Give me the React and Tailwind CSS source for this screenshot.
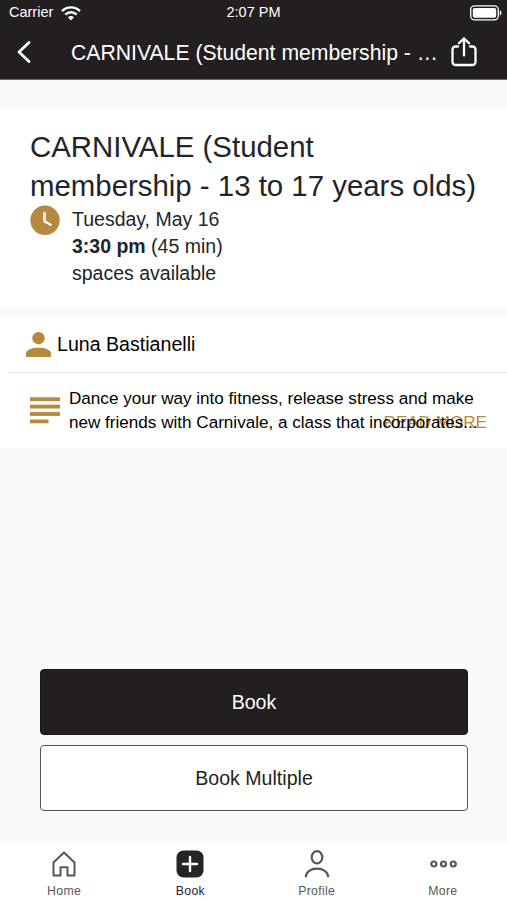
import React, { useState } from 'react';

const HomeIcon = () => (
  <svg className="w-7 h-7" viewBox="0 0 28 28" fill="none" stroke="currentColor" strokeWidth="2" strokeLinejoin="round">
    <path d="M3.5 25.4V12.5L14 2.6l10.5 9.9v12.9h-7v-8.2h-7v8.2z" />
  </svg>
);

const BookIcon = () => (
  <svg className="w-7 h-7" viewBox="0 0 28 28" fill="none">
    <rect x="0.5" y="0.5" width="27" height="27" rx="7" fill="currentColor" />
    <path d="M14 7v14M7 14h14" stroke="white" strokeWidth="2.4" strokeLinecap="round" />
  </svg>
);

const ProfileIcon = () => (
  <svg className="w-7 h-7" viewBox="0 0 28 28" fill="none" stroke="currentColor" strokeWidth="2.2">
    <ellipse cx="14" cy="7.3" rx="5.3" ry="6.1" />
    <path d="M2.8 27.3C2.8 21.5 8 18.6 14 18.6s11.2 2.9 11.2 8.7" />
  </svg>
);

const MoreIcon = () => (
  <svg className="w-7 h-7" viewBox="0 0 28 28" fill="none" stroke="currentColor" strokeWidth="2.2">
    <circle cx="4.8" cy="14" r="2.5" />
    <circle cx="14.5" cy="14" r="2.5" />
    <circle cx="24.3" cy="14" r="2.5" />
  </svg>
);

const tabs = [
  { id: 'home', label: 'Home', icon: HomeIcon },
  { id: 'book', label: 'Book', icon: BookIcon },
  { id: 'profile', label: 'Profile', icon: ProfileIcon },
  { id: 'more', label: 'More', icon: MoreIcon }
];

const StatusBar = () => (
  <div className="grid grid-cols-3 items-center h-[25px] pl-[9px] pr-[5px] text-[14.5px]">
    <div className="flex items-center gap-2">
      <span className="pt-px">Carrier</span>
      <svg className="w-5 h-4" viewBox="0 0 20 16" fill="none" stroke="currentColor" strokeWidth="2.4">
        <path d="M1 6.2C6 1.1 14 1.1 19 6.2" />
        <path d="M4.3 9.7c3.2-3.3 8.2-3.3 11.4 0" />
        <path d="M10 15.5l-3-3.2c1.7-1.7 4.3-1.7 6 0z" fill="currentColor" stroke="none" />
      </svg>
    </div>
    <span className="text-center pr-1">2:07 PM</span>
    <svg className="w-8 h-4 justify-self-end" viewBox="0 0 32 16" fill="none">
      <rect x="0.7" y="0.9" width="27.6" height="14" rx="3.8" stroke="white" strokeWidth="1.3" />
      <rect x="2.8" y="3" width="23.4" height="9.8" rx="1.8" fill="white" />
      <path d="M29.8 5.3c2.2.8 2.2 4.4 0 5.2z" fill="white" />
    </svg>
  </div>
);

const Header = () => (
  <header className="shrink-0 h-[80px] bg-[#231f20] text-white border-b border-[#6b6869]">
    <StatusBar />
    <div className="flex items-center h-[54px]">
      <button className="w-[71px] pl-[16px]" aria-label="Back">
        <svg className="w-4 h-6" viewBox="0 0 16 24" fill="none" stroke="currentColor" strokeWidth="2.8" strokeLinecap="round" strokeLinejoin="round">
          <path d="M13 2.5L3 12l10 9.5" />
        </svg>
      </button>
      <h1 className="w-[368px] pt-px text-[21.2px] whitespace-nowrap">CARNIVALE (Student membership - …</h1>
      <button className="ml-[11px]" aria-label="Share">
        <svg className="w-[28px] h-[30px]" viewBox="0 0 28 30" fill="none" stroke="currentColor" strokeWidth="2.3" strokeLinecap="round" strokeLinejoin="round">
          <path d="M8 9.5H5.5a3 3 0 0 0-3 3V25a3 3 0 0 0 3 3h17a3 3 0 0 0 3-3V12.5a3 3 0 0 0-3-3H20" />
          <path d="M14 18.5V1.5M9 6.2l5-4.7 5 4.7" />
        </svg>
      </button>
    </div>
  </header>
);

const ClassSummary = () => (
  <section className="mt-[28px] h-[198px] bg-white pl-[30px] pt-[19px] text-[#212529]">
    <h2 className="text-[29.4px] leading-[39px]">
      CARNIVALE (Student
      <br />
      membership - 13 to 17 years olds)
    </h2>
    <div className="flex gap-3">
      <svg className="w-[30px] h-[30px]" viewBox="0 0 30 30">
        <circle cx="15" cy="15.3" r="14.7" fill="#b58a3f" />
        <path d="M14.5 7.3v9l7 4" fill="none" stroke="white" strokeWidth="2.4" />
      </svg>
      <div className="pt-px text-[19.5px] leading-[27px]">
        <p>Tuesday, May 16</p>
        <p><b>3:30 pm</b> (45 min)</p>
        <p>spaces available</p>
      </div>
    </div>
  </section>
);

const ClassDetails = () => (
  <section className="mt-[10px] h-[132px] bg-white text-black">
    <div className="flex items-center gap-[6px] h-[56px] pl-[26px]">
      <svg className="w-[25px] h-[25px]" viewBox="0 0 25 25" fill="#b58a3f">
        <circle cx="12.5" cy="6.2" r="6.2" />
        <path d="M0 25v-3.2c0-4.3 6-6 12.500-6s12.500 1.700 12.500 6V25z" />
      </svg>
      <span className="pt-[2px] text-[19.6px]">Luna Bastianelli</span>
    </div>
    <div className="ml-2 border-t border-[#ebebec]" />
    <div className="relative flex pl-[30px] pt-[13px]">
      <svg className="w-[30px] h-[27px] mt-[11px] mr-[9px]" viewBox="0 0 30 27" fill="#b58a3f">
        <rect width="30" height="3.8" y="0.3" />
        <rect y="7.7" width="30" height="3.8" />
        <rect y="15.1" width="30" height="3.8" />
        <rect y="22.5" width="18.5" height="3.8" />
      </svg>
      <p className="relative z-10 pt-px text-[17.1px] leading-[24px] whitespace-nowrap">
        Dance your way into fitness, release stress and make
        <br />
        new friends with Carnivale, a class that incorporates...
      </p>
      <button className="absolute right-[20px] top-[38px] text-[17.1px] leading-[24px] text-[#b58a3f]">READ MORE</button>
    </div>
  </section>
);

const App = () => {
  const [activeTab, setActiveTab] = useState('book');

  return (
    <div className="flex flex-col w-[507px] h-[900px] bg-[#f8fafc] overflow-hidden font-['Liberation_Sans',Arial,sans-serif]">
      <Header />
      <main className="flex-1">
        <ClassSummary />
        <ClassDetails />
      </main>

      <div className="flex flex-col gap-[10px] pl-[40px] pr-[39px] pb-[30px] text-[19.6px]">
        <button className="h-[66px] pt-[2px] rounded bg-[#231f20] border border-[#1b1819] text-white">Book</button>
        <button className="h-[66px] pt-px rounded bg-white border-[1.5px] border-[#555354] text-[#231f20]">Book Multiple</button>
      </div>

      <nav className="grid grid-cols-4 h-[59px] px-[1px] bg-white">
        {tabs.map((tab) => {
          const Icon = tab.icon;
          const isActive = activeTab === tab.id;

          return (
            <button
              key={tab.id}
              onClick={() => setActiveTab(tab.id)}
              className={`flex flex-col items-center pt-[9px] gap-[5px] text-[12.3px] leading-4 tracking-[0.3px] ${isActive ? 'text-[#212529]' : 'text-[#55585b]'}`}
            >
              <Icon />
              <span>{tab.label}</span>
            </button>
          );
        })}
      </nav>
    </div>
  );
};

export default App;
